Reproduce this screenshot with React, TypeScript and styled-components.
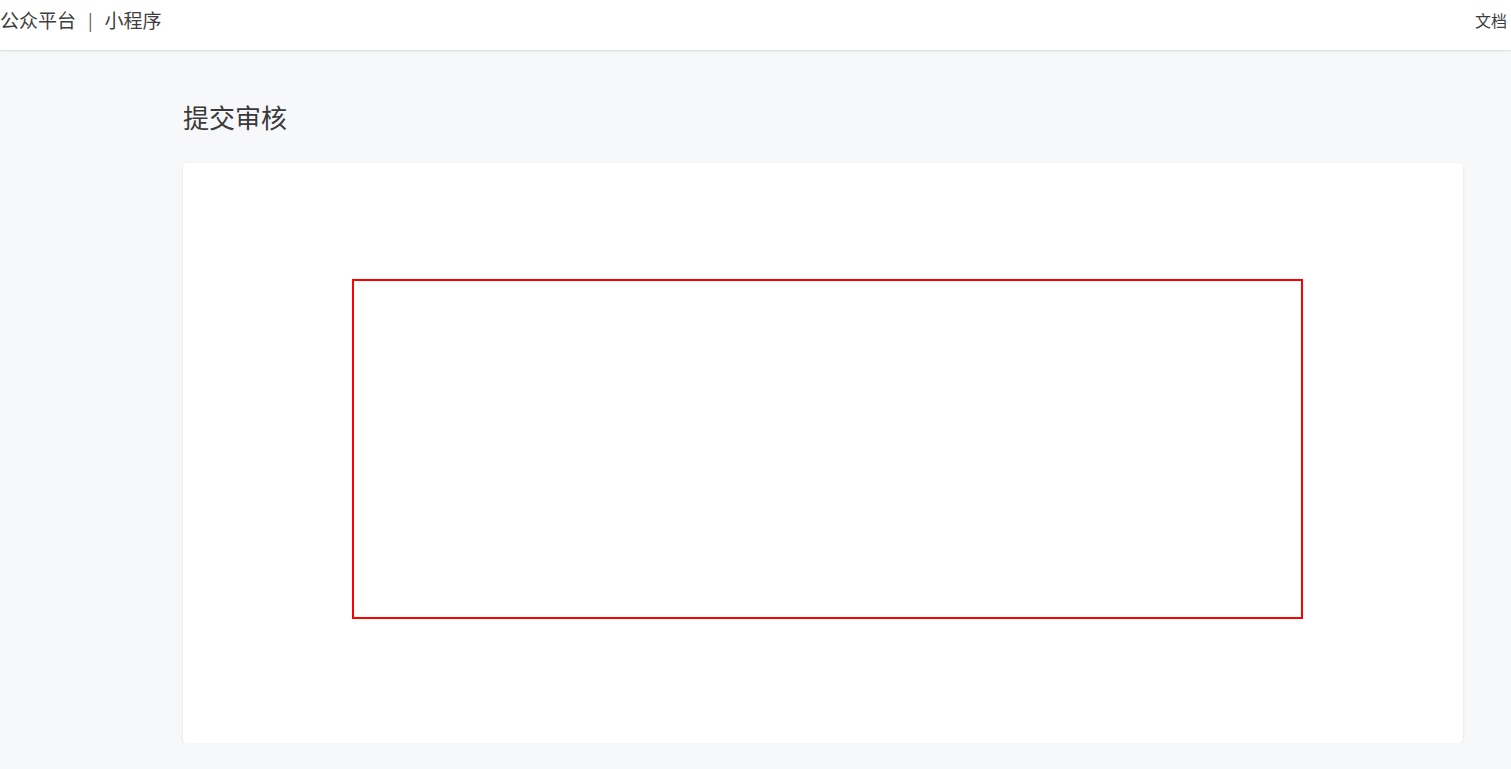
import React from "react";
import styled, { createGlobalStyle } from "styled-components";

const Global = createGlobalStyle`
  html, body { margin: 0; padding: 0; background: #f7f8fa; }
  body { font-family: "Noto Sans CJK SC", "Liberation Sans", sans-serif; color: #333; }
`;

const Header = styled.header`
  height: 50px;
  background: #fff;
  box-shadow: 0 1px 2px rgba(0, 0, 0, 0.12);
  display: flex;
  justify-content: space-between;
  align-items: flex-start;
  padding: 0 4px 0 0;
  position: relative;
`;

const Brand = styled.div`
  font-size: 19px;
  line-height: 40px;
  color: #3f3f3f;
  display: flex;
  gap: 12px;
`;

const Sep = styled.span`
  color: #555;
  font-size: 17px;
`;

const DocLink = styled.a`
  font-size: 16px;
  line-height: 40px;
  color: #3f3f3f;
  text-decoration: none;
`;

const Main = styled.main`
  width: 1280px;
  margin: 0 0 0 183px;
  padding-top: 48px;
`;

const Title = styled.h1`
  margin: 0;
  font-size: 26px;
  font-weight: 400;
  line-height: 38px;
  color: #3a3a3a;
`;

const Card = styled.section`
  margin-top: 27px;
  height: 580px;
  box-sizing: border-box;
  background: #fff;
  border-radius: 4px;
  box-shadow: 0 1px 3px rgba(0, 0, 0, 0.1);
  padding: 116px 0 0 169px;
`;

const Frame = styled.div`
  width: 951px;
  height: 340px;
  box-sizing: border-box;
  border: 2px solid #ff0000;
`;

export default function App() {
  return (
    <>
      <Global />
      <Header>
        <Brand>
          <span>公众平台</span>
          <Sep>|</Sep>
          <span>小程序</span>
        </Brand>
        <DocLink href="#">文档</DocLink>
      </Header>
      <Main>
        <Title>提交审核</Title>
        <Card>
          <Frame />
        </Card>
      </Main>
    </>
  );
}
